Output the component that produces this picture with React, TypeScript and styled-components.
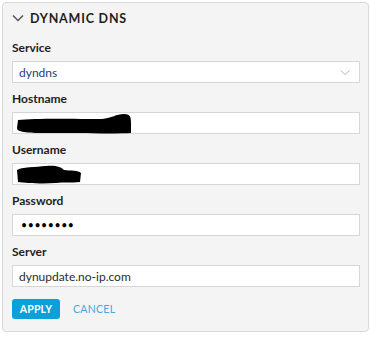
import styled, { createGlobalStyle } from "styled-components";

const GlobalStyle = createGlobalStyle`
  body {
    margin: 0;
    background: #ffffff;
    font-family: Lato, "Open Sans", sans-serif;
  }
`;

const Page = styled.div`
  padding: 2px 0 0 2px;
  width: 368px;
`;

const Panel = styled.section`
  box-sizing: border-box;
  width: 367px;
  background: #f4f4f4;
  border: 1px solid #d9d9d9;
  border-radius: 4px;
  padding-bottom: 12px;
`;

const Header = styled.div`
  height: 30px;
  display: flex;
  align-items: center;
  gap: 6px;
  padding-left: 9px;
`;

const Title = styled.h2`
  margin: 0;
  font-size: 12.5px;
  font-weight: 700;
  letter-spacing: 0.8px;
  color: #1f1f1f;
`;

const Body = styled.div`
  padding: 7px 8px 0 9px;
  display: flex;
  flex-direction: column;
  gap: 8px;
`;

const Field = styled.div`
  display: flex;
  flex-direction: column;
  gap: 6px;
`;

const Label = styled.label`
  font-size: 12px;
  line-height: 15px;
  font-weight: 700;
  color: #1e1e1e;
`;

const Box = styled.div`
  position: relative;
  height: 22px;
  box-sizing: border-box;
  background: #ffffff;
  border: 1px solid #d6d6d6;
  display: flex;
  align-items: center;
  justify-content: space-between;
  padding: 0 9px 0 6px;
`;

const Value = styled.span<{ $tone?: string }>`
  font-size: 12px;
  color: ${(p) => p.$tone || "#2b2b2b"};
`;

const Dots = styled.span`
  font-size: 10.5px;
  letter-spacing: 0.6px;
  color: #000;
  line-height: 1;
  margin-left: 2px;
`;

const Scribble = styled.svg`
  position: absolute;
  left: 3px;
  top: 1px;
`;

const Actions = styled.div`
  display: flex;
  align-items: center;
  gap: 13px;
  margin-top: 4px;
`;

const Apply = styled.button`
  height: 20px;
  width: 48px;
  border: none;
  border-radius: 3px;
  background: #0aa0dc;
  color: #fff;
  font-family: inherit;
  font-size: 10.5px;
  font-weight: 700;
  letter-spacing: 0.2px;
  padding: 0;
`;

const Cancel = styled.button`
  border: none;
  background: none;
  padding: 0;
  font-family: inherit;
  font-size: 10.5px;
  letter-spacing: 0.3px;
  color: #4aa6e2;
`;

export default function App() {
  return (
    <Page>
      <GlobalStyle />
      <Panel>
        <Header>
          <svg width="12" height="8" viewBox="0 0 12 8">
            <path d="M1 1.5 L6 6.5 L11 1.5" fill="none" stroke="#555" strokeWidth="1.5" />
          </svg>
          <Title>DYNAMIC DNS</Title>
        </Header>
        <Body>
          <Field>
            <Label>Service</Label>
            <Box>
              <Value $tone="#25407a">dyndns</Value>
              <svg width="10" height="5" viewBox="0 0 10 5">
                <path d="M0.5 0.5 L5 4.5 L9.5 0.5" fill="none" stroke="#b5b5b5" strokeWidth="1" />
              </svg>
            </Box>
          </Field>
          <Field>
            <Label>Hostname</Label>
            <Box>
              <Scribble width="116" height="20" viewBox="0 0 116 20">
                <path
                  d="M2 6 C20 4 60 5 86 5 C96 4 100 0 108 0 C115 0 115 4 115 10 L115 19 C100 20 60 19 30 19 C10 19 1 18 1 14 Z"
                  fill="#000"
                />
              </Scribble>
            </Box>
          </Field>
          <Field>
            <Label>Username</Label>
            <Box>
              <Scribble width="66" height="20" viewBox="0 0 66 20">
                <path
                  d="M1 5 C5 2 20 2 30 1 C40 0 45 2 48 5 C55 6 62 5 65 8 L64 17 C55 18 48 17 40 18 C25 19 10 18 2 17 Z"
                  fill="#000"
                />
              </Scribble>
            </Box>
          </Field>
          <Field>
            <Label>Password</Label>
            <Box>
              <Dots>••••••••</Dots>
            </Box>
          </Field>
          <Field>
            <Label>Server</Label>
            <Box>
              <Value>dynupdate.no-ip.com</Value>
            </Box>
          </Field>
          <Actions>
            <Apply>APPLY</Apply>
            <Cancel>CANCEL</Cancel>
          </Actions>
        </Body>
      </Panel>
    </Page>
  );
}
